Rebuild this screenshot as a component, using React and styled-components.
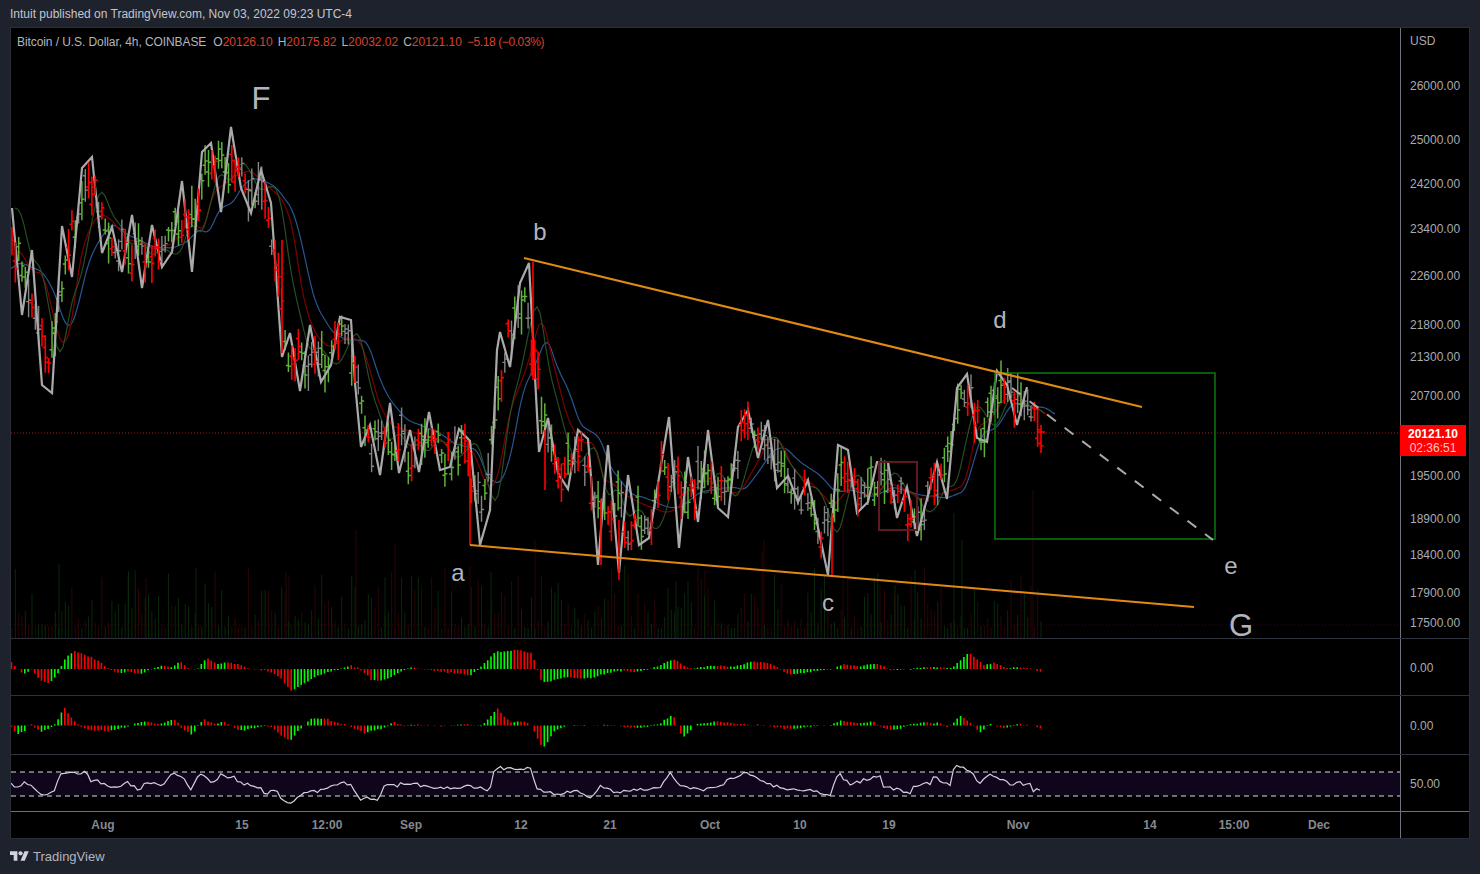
import styled, { createGlobalStyle } from 'styled-components';

const GlobalStyle = createGlobalStyle`
  html, body {
    margin: 0;
    padding: 0;
    background: #1e222d;
  }
  body {
    font-family: "Liberation Sans", Arial, sans-serif;
  }
`;

const Page = styled.div`
  display: flex;
  flex-direction: column;
  width: 1480px;
  height: 874px;
  overflow: hidden;
  background: #1e222d;
`;

const Header = styled.div`
  display: flex;
  align-items: center;
  height: 27px;
  padding-left: 10px;
  font-size: 12px;
  color: #c3c6ce;
`;

const Frame = styled.div`
  display: flex;
  flex-direction: column;
  width: 1458px;
  margin-left: 10px;
  border: 1px solid #2a2e39;
  background: #000;
`;

const Row = styled.div`
  display: flex;
  height: ${(p) => p.$height}px;
  box-sizing: border-box;
  border-bottom: ${(p) => (p.$last ? 'none' : `1px solid ${p.$line || '#2f323c'}`)};
`;

const PaneArea = styled.div`
  position: relative;
  width: 1389px;
`;

const AxisCell = styled.div`
  position: relative;
  display: flex;
  align-items: center;
  flex: 1;
  padding: 2px 0 0 9px;
  border-left: 1px solid #70737c;
  font-size: 12px;
  color: #a8abb2;
`;

const Chart = styled.svg`
  display: block;
`;

const Legend = styled.div`
  position: absolute;
  left: 6px;
  top: 7px;
  display: flex;
  gap: 5px;
  font-size: 12px;
  line-height: 14px;
  white-space: nowrap;
  color: #b2b5be;
`;

const LegendTitle = styled.span`
  margin-right: 2px;
  letter-spacing: -0.08px;
`;

const LegendValue = styled.span`
  color: #d8432f;
`;

const LegendChange = styled(LegendValue)`
  letter-spacing: -0.4px;
`;

const WaveLabel = styled.span`
  position: absolute;
  left: ${(p) => p.$x - 11}px;
  top: ${(p) => p.$y - 28}px;
  transform: translate(-50%, -50%);
  font-size: ${(p) => p.$size}px;
  line-height: 0.8;
  color: #b2b5be;
`;

const PriceTick = styled.span`
  position: absolute;
  left: 9px;
  top: ${(p) => p.$y - 28}px;
  transform: translateY(-50%);
  white-space: nowrap;
`;

const PriceTag = styled.div`
  position: absolute;
  left: -1px;
  top: 397px;
  display: flex;
  flex-direction: column;
  align-items: center;
  justify-content: center;
  width: 66px;
  height: 31px;
  background: #ff0000;
  font-size: 12px;
  line-height: 14px;
  color: #fff;
`;

const TagPrice = styled.span`
  font-weight: 700;
`;

const TagTimer = styled.span`
  color: #ffc4c4;
`;

const TimeTick = styled.span`
  position: absolute;
  left: ${(p) => p.$x - 11}px;
  top: 50%;
  transform: translate(-50%, -50%);
  font-size: 12px;
  font-weight: 700;
  color: #85888f;
`;

const Footer = styled.div`
  display: flex;
  align-items: center;
  gap: 4px;
  height: 35px;
  padding-left: 10px;
  font-size: 13px;
  color: #b2b5be;
`;

function seeded(seed) {
  let s = seed;
  return () => {
    s = (s + 0x6d2b79f5) | 0;
    let t = Math.imul(s ^ (s >>> 15), 1 | s);
    t = (t + Math.imul(t ^ (t >>> 7), 61 | t)) ^ t;
    return ((t ^ (t >>> 14)) >>> 0) / 4294967296;
  };
}

// all of these are traced off the picture, in page coordinates
const ZIG = [
  [12, 208], [22, 315], [32, 250], [42, 385], [52, 393], [62, 226], [72, 277], [82, 168], [92, 157], [102, 253],
  [112, 227], [122, 272], [132, 215], [142, 288], [152, 225], [162, 267], [172, 252], [182, 181], [192, 272],
  [202, 152], [211, 143], [221, 212], [231, 127], [241, 188], [251, 213], [261, 170], [271, 203], [282, 357],
  [290, 333], [300, 391], [310, 325], [321, 382], [331, 365], [340, 317], [351, 320], [355, 383], [361, 447],
  [370, 425], [380, 475], [390, 403], [399, 473], [410, 430], [419, 472], [429, 412], [440, 470], [450, 467],
  [459, 429], [470, 441], [480, 545], [490, 510], [497, 350], [500, 332], [510, 367], [520, 283], [529, 263],
  [539, 452], [548, 418], [558, 473], [568, 489], [578, 430], [588, 439], [598, 565], [608, 445], [619, 573],
  [628, 475], [639, 545], [649, 538], [669, 417], [679, 548], [688, 457], [698, 522], [708, 430], [718, 508],
  [728, 517], [738, 427], [748, 410], [758, 458], [768, 420], [777, 488], [788, 476], [798, 502], [808, 480],
  [828, 575], [838, 445], [848, 450], [857, 513], [868, 502], [877, 462], [888, 462], [897, 518], [907, 487],
  [917, 536], [937, 462], [947, 499], [957, 388], [967, 374], [977, 438], [987, 442], [997, 371], [1007, 385],
  [1017, 425], [1027, 387],
];

const JAW = [
  [11, 270], [17, 263], [22, 263], [43, 272], [55, 293], [62, 317], [70, 331], [78, 307], [88, 263], [98, 242],
  [112, 223], [128, 235], [140, 240], [153, 247], [173, 248], [187, 242], [200, 228], [208, 235], [220, 208],
  [233, 203], [243, 185], [253, 178], [267, 182], [277, 188], [293, 210], [302, 243], [310, 283], [317, 307],
  [333, 333], [347, 340], [360, 340], [368, 342], [380, 380], [390, 400], [407, 420], [420, 425], [440, 433],
  [453, 443], [478, 450], [487, 477], [500, 485], [510, 460], [523, 390], [533, 370], [547, 336], [557, 367],
  [570, 393], [580, 425], [600, 437], [610, 467], [632, 495], [643, 497], [667, 507], [680, 508], [700, 492],
  [733, 487], [745, 490], [760, 470], [773, 450], [785, 447], [800, 462], [820, 475], [835, 492], [853, 490],
  [873, 497], [893, 487], [920, 495], [947, 498], [965, 491], [982, 433], [997, 428], [1012, 403], [1027, 405],
  [1047, 408], [1055, 415],
];

const TEETH = [
  [11, 258], [17, 248], [23, 255], [32, 272], [43, 273], [50, 300], [58, 337], [65, 347], [72, 323], [80, 257],
  [90, 227], [100, 213], [112, 220], [127, 240], [140, 242], [157, 250], [173, 243], [192, 219], [203, 233],
  [213, 193], [233, 177], [250, 170], [267, 185], [283, 200], [293, 227], [300, 280], [307, 313], [317, 337],
  [330, 348], [347, 337], [360, 340], [368, 363], [380, 407], [393, 427], [407, 430], [427, 437], [447, 443],
  [468, 443], [477, 460], [487, 488], [497, 483], [510, 410], [527, 367], [537, 330], [542, 314], [550, 350],
  [567, 417], [580, 442], [595, 443], [603, 480], [613, 483], [622, 493], [640, 503], [667, 513], [680, 507],
  [688, 487], [707, 480], [733, 493], [740, 493], [757, 463], [770, 438], [782, 442], [793, 470], [817, 488],
  [833, 507], [850, 487], [873, 497], [887, 482], [907, 490], [920, 500], [953, 490], [965, 485], [977, 427],
  [990, 420], [1003, 400], [1012, 396], [1027, 405], [1040, 410], [1052, 418],
];

const toPath = (pts) => pts.map(([x, y], i) => `${i ? 'L' : 'M'}${x.toFixed(1)} ${y.toFixed(1)}`).join('');

function sampler(pts) {
  return (x) => {
    if (x <= pts[0][0]) return pts[0][1];
    for (let i = 1; i < pts.length; i++) {
      if (x <= pts[i][0]) {
        const [x0, y0] = pts[i - 1];
        const [x1, y1] = pts[i];
        return y0 + ((x - x0) * (y1 - y0)) / (x1 - x0);
      }
    }
    return pts[pts.length - 1][1];
  };
}

const pricePath = sampler([...ZIG.slice(0, -1), [1027, 402], [1035, 420], [1042, 432]]);

// rounds off a traced line so that it doesn't look like a polyline
function smoothed(pts) {
  const at = sampler(pts);
  const last = pts[pts.length - 1][0];
  const out = [];
  for (let x = pts[0][0]; x <= last; x += 2) {
    out.push([x, (at(x - 4) + at(x - 2) + at(x) + at(x + 2) + at(x + 4)) / 5]);
  }
  return toPath(out);
}

function lipsLine() {
  let v = pricePath(12);
  let w = v;
  const out = [];
  for (let x = 12; x <= 1042; x += 1) {
    v += (pricePath(x) - v) / 8;
    w += (v - w) / 8;
    if ((x - 12) % 3 === 0) out.push([x + 3, w]);
  }
  return toPath(out);
}

function buildBars() {
  const rnd = seeded(21);
  const d = { red: '', green: '', gray: '' };
  for (let x = 12; x <= 1042; x += 3.33) {
    const near = (pricePath(x - 9) + pricePath(x - 4) + pricePath(x + 4) + pricePath(x + 9)) / 4;
    const c = near + (rnd() - 0.5) * 30;
    const h = 14 + rnd() * 30;
    const slope = pricePath(x + 3) - pricePath(x - 3);
    const r = rnd();
    let key = 'gray';
    if (slope > 3) key = r < 0.55 ? 'red' : r < 0.72 ? 'green' : 'gray';
    else if (slope < -3) key = r < 0.55 ? 'green' : r < 0.7 ? 'red' : 'gray';
    else key = r < 0.4 ? 'green' : r < 0.65 ? 'red' : 'gray';
    const o = c + (rnd() - 0.5) * h * 0.6;
    const k = c + (rnd() - 0.5) * h * 0.6;
    d[key] += `M${x.toFixed(1)} ${(c - h / 2).toFixed(1)}V${(c + h / 2).toFixed(1)}`;
    d[key] += `M${(x - 2.5).toFixed(1)} ${o.toFixed(1)}H${x.toFixed(1)}M${x.toFixed(1)} ${k.toFixed(1)}H${(x + 2.5).toFixed(1)}`;
  }
  // the long wicks
  d.red += 'M470 452V545M282 240V353M533 262V380M545 430V490M832 513V575M601 500V565M619 520V580M1041 425V438M1038 432H1045';
  return d;
}

const VOLUME_SPIKES = [
  [59, 564, 'g'], [128, 575, 'r'], [196, 568, 'g'], [146, 578, 'r'], [286, 572, 'r'], [289, 575, 'r'],
  [356, 530, 'r'], [395, 543, 'r'], [385, 577, 'g'], [470, 566, 'r'], [491, 572, 'g'], [535, 540, 'r'],
  [676, 582, 'g'], [764, 540, 'r'], [762, 552, 'r'], [843, 520, 'r'], [954, 513, 'g'], [962, 540, 'g'],
  [1033, 490, 'r'], [880, 585, 'r'], [895, 585, 'g'], [915, 570, 'g'], [705, 570, 'r'],
];

function buildVolume() {
  const rnd = seeded(7);
  let red = '';
  let green = '';
  for (let x = 12; x <= 1042; x += 3.33) {
    const h = 10 + Math.pow(rnd(), 2.2) * 62;
    const seg = `M${x.toFixed(1)} 638V${(638 - h).toFixed(1)}`;
    if (rnd() < 0.5) red += seg;
    else green += seg;
  }
  VOLUME_SPIKES.forEach(([x, top, c]) => {
    const seg = `M${x} 638V${top}`;
    if (c === 'r') red += seg;
    else green += seg;
  });
  return { red, green };
}

const OSC_A = [
  [11, 6], [20, -3], [25, -5], [32, 1], [40, -10], [50, -14], [58, -6], [65, 9], [74, 18], [90, 14], [100, 7],
  [107, 0], [118, -5], [128, -2], [142, -4], [150, 0], [165, 2], [172, 1], [180, 8], [190, 1], [197, 0], [207, 10],
  [217, 3], [225, 7], [240, 6], [250, 0], [265, -3], [280, -7], [291, -21], [305, -15], [320, -7], [335, 0], [350, 4],
  [360, -1], [372, -12], [385, -10], [395, -4], [410, 0], [440, -1], [470, -8], [480, 2], [495, 18], [532, 17],
  [542, -12], [580, -9], [600, -6], [620, -3], [640, -1], [660, 2], [673, 9], [690, 2], [730, 2], [750, 8], [770, 4],
  [790, -4], [810, -4], [830, -1], [842, 6], [860, 2], [880, 5], [890, 0], [911, -1], [939, 3], [953, 2], [969, 15],
  [984, 5], [994, 8], [1008, 0], [1034, 0], [1043, -3],
];

const OSC_B = [
  [11, -2], [17, -10], [25, -5], [30, 3], [40, -5], [50, -3], [57, 3], [64, 17], [73, 5], [85, -2], [100, -5],
  [110, -7], [125, -2], [135, 3], [145, 5], [150, 3], [160, 0], [175, 6], [182, -2], [192, -8], [203, 6], [215, 0],
  [225, 4], [240, -4], [270, -2], [290, -14], [297, -6], [310, 5], [325, 7], [345, 2], [365, -9], [385, -1], [393, 5],
  [405, -1], [440, 1], [480, -1], [497, 18], [510, 2], [530, 3], [543, -22], [555, -5], [575, 0], [590, 2], [625, -2],
  [660, 1], [673, 10], [683, -12], [695, 2], [740, 3], [770, -2], [810, -2], [830, 0], [842, 7], [860, 1], [872, 3],
  [890, -4], [911, 0], [939, 4], [949, -1], [960, 9], [969, 3], [980, -7], [990, 3], [1006, -3], [1018, 0], [1034, 0],
  [1043, -2],
];

function buildHistogram(keys, zero, seed) {
  const rnd = seeded(seed);
  const base = sampler(keys);
  const at = (x) => base(x) + 1.3 * Math.sin(x / 8);
  let red = '';
  let green = '';
  for (let x = 11.5; x <= 1043; x += 3.33) {
    const v = at(x) + (rnd() - 0.5) * 1.2;
    const rising = at(x + 2) >= at(x - 2);
    const seg = `M${x.toFixed(1)} ${zero}V${(zero - v).toFixed(1)}`;
    if (rising) green += seg;
    else red += seg;
  }
  return { red, green };
}

const RSI_HEAD = [
  [33, 462], [50, 472], [80, 457], [100, 478], [120, 490], [140, 500], [165, 478], [180, 436], [205, 425], [235, 432],
  [260, 422], [270, 450], [295, 452], [320, 468], [360, 475], [378, 452], [395, 465], [420, 482], [435, 455],
  [490, 465], [525, 425], [550, 445], [575, 480], [590, 440], [610, 432], [640, 462], [660, 435], [690, 445],
  [700, 438], [720, 460], [770, 470], [800, 490], [830, 477], [850, 515], [867, 525], [905, 490], [950, 485],
  [1000, 462], [1020, 460], [1055, 462], [1075, 505], [1110, 507], [1135, 512], [1155, 465], [1180, 460],
  [1185, 480], [1200, 458], [1260, 465],
].map(([x, y]) => [x / 3, 630 + y / 3]);

const RSI_TAIL = [
  [440, 788], [470, 786], [490, 790], [495, 768], [530, 768], [537, 790], [560, 795], [575, 790], [590, 800],
  [600, 785], [615, 792], [640, 790], [660, 788], [670, 772], [680, 785], [700, 790], [720, 785], [745, 772],
  [755, 778], [770, 785], [790, 790], [810, 790], [830, 797], [838, 773], [850, 785], [865, 780], [880, 775],
  [884, 787], [900, 790], [911, 795], [913, 785], [931, 784], [935, 773], [941, 783], [951, 784], [954, 767],
  [962, 766], [973, 772], [979, 785], [988, 774], [994, 775], [1012, 786], [1018, 783], [1031, 785], [1034, 792],
  [1038, 787], [1041, 792],
];

function buildRsi() {
  const rnd = seeded(99);
  const at = sampler([...RSI_HEAD, ...RSI_TAIL]);
  const pts = [];
  for (let x = 11; x <= 1041; x += 3.33) pts.push([x, at(x) + (rnd() - 0.5) * 3.5]);
  return toPath(pts);
}

const bars = buildBars();
const volume = buildVolume();
const histA = buildHistogram(OSC_A, 669, 3);
const histB = buildHistogram(OSC_B, 725.5, 5);
const rsiPath = buildRsi();
const zigPath = toPath(ZIG);
const lipsPath = lipsLine();
const teethPath = smoothed(TEETH);
const jawPath = smoothed(JAW);

const PRICE_TICKS = [
  ['26000.00', 86], ['25000.00', 140], ['24200.00', 184], ['23400.00', 229], ['22600.00', 276], ['21800.00', 325],
  ['21300.00', 357], ['20700.00', 396], ['19500.00', 476], ['18900.00', 519], ['18400.00', 555], ['17900.00', 593],
  ['17500.00', 623],
];

const TIME_TICKS = [
  ['Aug', 103], ['15', 242], ['12:00', 327], ['Sep', 411], ['12', 521], ['21', 610], ['Oct', 710], ['10', 800],
  ['19', 889], ['Nov', 1018], ['14', 1150], ['15:00', 1234], ['Dec', 1319],
];

const WAVES = [
  ['F', 261, 99, 31], ['b', 540, 232, 24], ['a', 458, 573, 24], ['c', 828, 603, 24], ['d', 1000, 320, 24],
  ['e', 1231, 566, 24], ['G', 1241, 626, 31],
];

const Histogram = ({ data, top, height }) => (
  <Chart width="1389" height={height} viewBox={`11 ${top} 1389 ${height}`}>
    <path d={data.red} stroke="#ff0000" strokeWidth="1.6" fill="none" />
    <path d={data.green} stroke="#00ff00" strokeWidth="1.6" fill="none" />
  </Chart>
);

const MainChart = () => (
  <Chart width="1389" height="610" viewBox="11 28 1389 610">
    <g fill="none" strokeWidth="1">
      <path d={volume.red} stroke="#2a0606" />
      <path d={volume.green} stroke="#092809" />
      <path d="M11 625H1400" stroke="#3a0808" strokeDasharray="1 2" />
      <path d="M11 433H1400" stroke="#b01818" strokeDasharray="1 2" />
      <path d={jawPath} stroke="#2a5590" strokeWidth="1.2" />
      <path d={teethPath} stroke="#7d0000" strokeWidth="1.2" />
      <path d={lipsPath} stroke="#284d21" strokeWidth="1.2" />
      <path d={bars.gray} stroke="#858585" strokeWidth="1.4" />
      <path d={bars.green} stroke="#5fb338" strokeWidth="1.5" />
      <path d={zigPath} stroke="#aaaaaa" strokeWidth="2.2" strokeLinejoin="miter" />
      <path d={bars.red} stroke="#ff0000" strokeWidth="1.6" />
      <rect x="879" y="462" width="38" height="68" stroke="#5e1a22" strokeWidth="2" />
      <rect x="995" y="373" width="220" height="166" stroke="#0b7a0b" strokeWidth="1.5" />
      <path d="M1012 388L1213 540" stroke="#aaaaaa" strokeWidth="2" strokeDasharray="11 11" />
      <path d="M524 258L1142 407M470 545L1194 607" stroke="#e08a12" strokeWidth="2" />
    </g>
  </Chart>
);

const RsiChart = () => (
  <Chart width="1389" height="56" viewBox="11 755 1389 56">
    <rect x="11" y="772" width="1389" height="24" fill="#10061c" />
    <path d="M11 772H1400M11 796H1400" stroke="#d8d8dc" strokeDasharray="5 4" fill="none" />
    <path d={rsiPath} stroke="#d5cde0" strokeWidth="1.2" fill="none" />
  </Chart>
);

const App = () => {
  return (
    <Page>
      <GlobalStyle />
      <Header>Intuit published on TradingView.com, Nov 03, 2022 09:23 UTC-4</Header>
      <Frame>
        <Row $height={611}>
          <PaneArea>
            <MainChart />
            <Legend>
              <LegendTitle>Bitcoin / U.S. Dollar, 4h, COINBASE</LegendTitle>
              <span>O<LegendValue>20126.10</LegendValue></span>
              <span>H<LegendValue>20175.82</LegendValue></span>
              <span>L<LegendValue>20032.02</LegendValue></span>
              <span>C<LegendValue>20121.10</LegendValue></span>
              <LegendChange>−5.18 (−0.03%)</LegendChange>
            </Legend>
            {WAVES.map(([text, x, y, size]) => (
              <WaveLabel key={text} $x={x} $y={y} $size={size}>{text}</WaveLabel>
            ))}
          </PaneArea>
          <AxisCell>
            <PriceTick $y={41}>USD</PriceTick>
            {PRICE_TICKS.map(([text, y]) => (
              <PriceTick key={text} $y={y}>{text}</PriceTick>
            ))}
            <PriceTag>
              <TagPrice>20121.10</TagPrice>
              <TagTimer>02:36:51</TagTimer>
            </PriceTag>
          </AxisCell>
        </Row>
        <Row $height={57}>
          <PaneArea>
            <Histogram data={histA} top={639} height={56} />
          </PaneArea>
          <AxisCell>0.00</AxisCell>
        </Row>
        <Row $height={59}>
          <PaneArea>
            <Histogram data={histB} top={696} height={58} />
          </PaneArea>
          <AxisCell>0.00</AxisCell>
        </Row>
        <Row $height={57} $line="#70737c">
          <PaneArea>
            <RsiChart />
          </PaneArea>
          <AxisCell>50.00</AxisCell>
        </Row>
        <Row $height={26} $last>
          <PaneArea>
            {TIME_TICKS.map(([text, x]) => (
              <TimeTick key={text} $x={x}>{text}</TimeTick>
            ))}
          </PaneArea>
          <AxisCell />
        </Row>
      </Frame>
      <Footer>
        <svg width="19" height="15" viewBox="0 0 36 28" aria-hidden="true">
          <path d="M14 22H7V11H0V4h14v18zM28 22h-8l7.5-18h8L28 22z" fill="#d1d4dc" />
          <circle cx="20" cy="8" r="4" fill="#d1d4dc" />
        </svg>
        <span>TradingView</span>
      </Footer>
    </Page>
  );
};

export default App;
